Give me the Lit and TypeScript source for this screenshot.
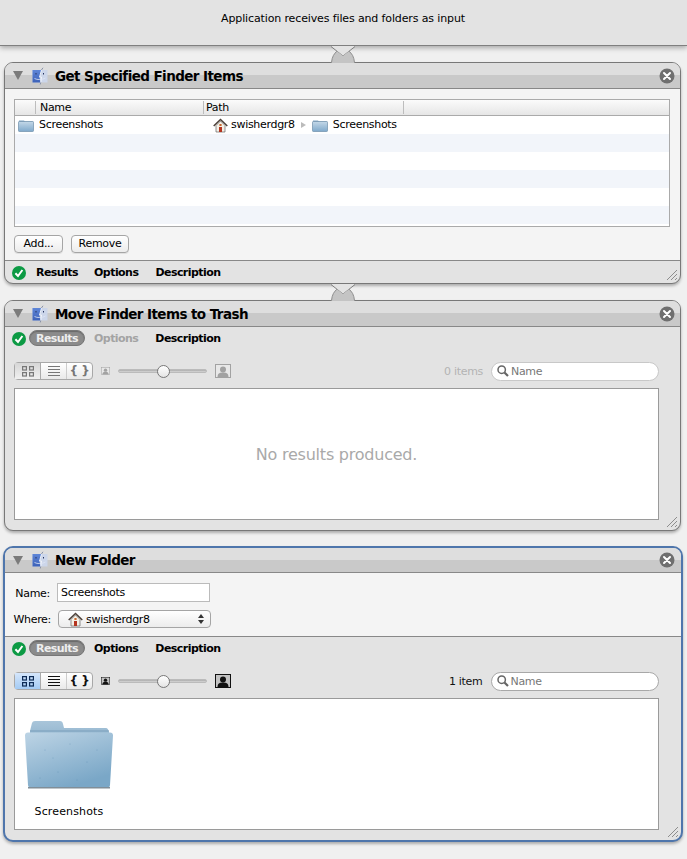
import { LitElement, html, css, svg } from "lit";
import { customElement } from "lit/decorators.js";

const finder = () => svg`<svg class="finder" width="18" height="18" viewBox="0 0 18 18">
  <defs><linearGradient id="fb" x1="0" y1="0" x2="0" y2="1"><stop offset="0" stop-color="#5f86d8"/><stop offset="1" stop-color="#3d62b8"/></linearGradient></defs>
  <rect x="1.500" y="3" width="15" height="12.500" fill="#ccd6ea"/>
  <path d="M1.500 3H10.500L8.500 10 9.500 15.500H1.500Z" fill="url(#fb)"/>
  <path d="M10.500 3 8.500 10h2L9.800 15.500" fill="none" stroke="#f4f6fb" stroke-width=".9"/>
  <path d="M5 6v1.500M12.500 6v1.500" stroke="#26345e" stroke-width="1"/>
  <path d="M3.500 11.500c2.500 1.500 8 1.500 11-.5" fill="none" stroke="#dfe6f5" stroke-width=".8"/>
  <path d="M12 .8 10.400 3M9.800 15.500l-.6 2" stroke="#8a93a8" stroke-width="1"/>
</svg>`;

const closeBtn = () => svg`<svg class="close" width="16" height="16" viewBox="0 0 16 16">
  <circle cx="8" cy="8" r="7.500" fill="#6f6f6f"/><path d="M5 5l6 6M11 5l-6 6" stroke="#fff" stroke-width="2" stroke-linecap="round"/>
</svg>`;

const check = () => svg`<svg class="check" width="14" height="14" viewBox="0 0 14 14">
  <circle cx="7" cy="7" r="7" fill="#0c9a44"/><path d="M3.400 7.200l2.600 2.800 4.400-6" fill="none" stroke="#fff" stroke-width="2"/>
</svg>`;

const folder = () => svg`<svg class="sfolder" width="16" height="14" viewBox="0 0 16 14">
  <defs><linearGradient id="sf" x1="0" y1="0" x2="0" y2="1"><stop offset="0" stop-color="#c4d8e8"/><stop offset="1" stop-color="#7fa9cb"/></linearGradient></defs>
  <path d="M1 2.500h5l1 1h8V13H1Z" fill="#86a9c6"/><rect x=".5" y="3.500" width="15" height="10" rx=".8" fill="url(#sf)" stroke="#6f8fab" stroke-width=".7"/>
</svg>`;

const house = () => svg`<svg class="house" width="15" height="15" viewBox="0 0 15 15">
  <path d="M3 7.500V14h9V7.500L7.500 3Z" fill="#f4f0e6" stroke="#666" stroke-width=".7"/>
  <path d="M.7 8 7.500 1.500 14.300 8" fill="none" stroke="#4c4038" stroke-width="1.500"/>
  <rect x="6" y="9" width="3" height="5" fill="#b5341f"/><rect x="6.400" y="6" width="2.200" height="2" fill="#c86a30"/>
</svg>`;

const notch = () => svg`<svg class="notch" width="27" height="17" viewBox="0 0 27 17">
  <path d="M1 0 13 10 25 0Z" fill="#e3e3e3"/>
  <path d="M1 .5 13 10 25 .5" fill="none" stroke="#808080"/>
  <path d="M1.500 17C2 11 4 7.500 7 5.200L13 10 19 5.200C22 7.500 24 11 24.500 17Z" fill="#c4c4c4"/>
  <path d="M1.500 16.500C2 11 4 7.500 7 5.200M24.500 16.500C24 11 22 7.500 19 5.200" fill="none" stroke="#8e8e8e"/>
</svg>`;

const grip = () => svg`<svg class="grip" width="12" height="12" viewBox="0 0 12 12">
  <path d="M1 11 11 1M5 11l6-6M9 11l2-2" stroke="#777" stroke-width=".8"/>
</svg>`;

const icoGrid = () => svg`<svg width="12" height="11" viewBox="0 0 12 11" fill="none" stroke="currentColor" stroke-width="1.200"><rect x=".6" y=".6" width="3.800" height="3.400"/><rect x="7.600" y=".6" width="3.800" height="3.400"/><rect x=".6" y="6.600" width="3.800" height="3.400"/><rect x="7.600" y="6.600" width="3.800" height="3.400"/></svg>`;
const icoList = () => svg`<svg width="12" height="11" viewBox="0 0 12 11" stroke="currentColor"><path d="M0 .5h12M0 3.500h12M0 6.500h12M0 9.500h12"/></svg>`;
const person = (w: number, h: number) => svg`<svg width="${w}" height="${h}" viewBox="0 0 16 14"><rect x=".5" y=".5" width="15" height="13" fill="#fff" stroke="currentColor"/><rect x="1" y="1" width="14" height="12" fill="currentColor" opacity=".25"/><circle cx="8" cy="5.500" r="3" fill="currentColor"/><path d="M2.500 13c0-4 3-4.500 5.500-4.500s5.500.5 5.500 4.500Z" fill="currentColor"/></svg>`;
const mag = () => svg`<svg class="mag" width="12" height="12" viewBox="0 0 12 12" fill="none" stroke="#666"><circle cx="4.700" cy="4.700" r="3.700" stroke-width="1.500"/><path d="M7.500 7.500l3.500 3.500" stroke-width="2.200"/></svg>`;
const bigFolder = () => svg`<svg width="88" height="70" viewBox="0 0 88 70">
  <defs>
    <linearGradient id="bf" x1="0" y1="0" x2=".5" y2="1"><stop offset="0" stop-color="#bdd4e5"/><stop offset="1" stop-color="#7aa7c7"/></linearGradient>
    <linearGradient id="bs" x1="0" y1="0" x2="0" y2="1"><stop offset="0" stop-color="#a9c5da"/><stop offset="1" stop-color="#8fb3cd"/></linearGradient>
  </defs>
  <path d="M5 11 7 3Q7.500 1 10 1H35Q37.500 1 38 4L39 8H81Q83 8 84 12V20H5Z" fill="url(#bs)"/>
  <path d="M5 11H84" stroke="#7a9fbb" stroke-width="1"/>
  <path d="M3 12.500H85Q88 12.500 88 15.500L85 65Q85 67.500 82 67.500H6Q3 67.500 3 65L0 15.500Q0 12.500 3 12.500Z" fill="url(#bf)"/>
  <rect x="3" y="67" width="82" height="1.500" fill="#808e98"/>
  <g fill="#5d8fb4" opacity=".6"><circle cx="20" cy="30" r=".5"/><circle cx="45" cy="24" r=".5"/><circle cx="62" cy="42" r=".6"/><circle cx="33" cy="52" r=".6"/><circle cx="72" cy="30" r=".5"/><circle cx="15" cy="58" r=".5"/><circle cx="52" cy="60" r=".6"/><circle cx="28" cy="38" r=".5"/></g>
</svg>`;

@customElement("app-root")
class AppRoot extends LitElement {
  static styles = css`
    :host { display: block; width: 687px; height: 859px; overflow: hidden; background: #f0f0f0; font-family: "DejaVu Sans", sans-serif; font-size: 11px; letter-spacing: -0.3px; color: #000; }
    svg { display: block; flex: none; }
    .head { height: 46px; box-sizing: border-box; background: #e3e3e3; border-bottom: 1px solid #7f7f7f; box-shadow: 0 2px 5px rgba(0,0,0,.3); text-align: center; padding-top: 12px; line-height: 13px; padding-right: 1px; letter-spacing: -0.13px; position: relative; }
    .cards { display: flex; flex-direction: column; padding: 16px 6px 0 4px; gap: 16px; }
    .card { position: relative; border: 1px solid #787878; border-radius: 9px; box-shadow: 0 2px 3px rgba(0,0,0,.28); background: #e3e3e3; }
    .card.sel { border: 2.5px solid #4f76ac; margin: -1px -1.5px 0 -1px; border-radius: 10px; }
    .title { height: 25px; border-bottom: 1px solid #888; border-radius: 8px 8px 0 0; background: linear-gradient(#dedede 0 12px, #c9c9c9 12px); display: flex; align-items: center; padding: 0 5px 0 8px; }
    .sel .title { height: 24px; padding-right: 6px; }
    .tri { width: 0; height: 0; border-left: 5px solid transparent; border-right: 5px solid transparent; border-top: 9px solid #7b7b7b; margin-right: 8px; }
    .finder { margin-right: 6px; }
    .title h2 { margin: 0; flex: 1; font-size: 13.5px; font-weight: 700; letter-spacing: -0.58px; }
    .sel .title h2 { margin-bottom: 1px; }
    .notch { position: absolute; left: 325px; top: -17px; z-index: 2; }
    .grip { position: absolute; right: 2px; bottom: 2px; }

    .body { background: #f4f4f4; padding: 10px 10px 8px 9px; height: 172px; box-sizing: border-box; border-bottom: 1px solid #888; }
    .table { height: 128px; box-sizing: border-box; border: 1px solid #aaa; background: #fff; overflow: hidden; }
    .thead { height: 16px; box-sizing: border-box; border-bottom: 1px solid #aaa; background: linear-gradient(#fbfbfb, #e6e6e6); display: grid; grid-template-columns: 21px 168px 200px 1fr; line-height: 15px; }
    .thead span { border-right: 1px solid #bdbdbd; padding-left: 4px; margin: 1px 0; line-height: 13px; }
    .thead span:nth-child(3) { padding-left: 2px; }
    .thead span:last-child { border: none; }
    .rows { display: flex; flex-direction: column; }
    .row { height: 18px; display: flex; align-items: center; }
    .row:nth-child(even) { background: #f2f5fa; }
    .row .n { display: flex; align-items: center; gap: 5px; width: 198px; padding-left: 3px; box-sizing: border-box; }
    .row .p { display: flex; align-items: center; }
    .row span { margin-bottom: 2px; }
    .arrow { width: 0; height: 0; border-left: 5px solid #bbb; border-top: 3px solid transparent; border-bottom: 3px solid transparent; margin: 0 6px 0 6px; }
    .house { margin-right: 3px; }
    .lead { margin-left: 5px; }
    .btns { display: flex; gap: 8px; margin-top: 8px; }
    .btn { height: 18px; box-sizing: border-box; border: 1px solid #a5a5a5; border-radius: 4px; background: linear-gradient(#fff, #ececec); text-align: center; line-height: 16px; box-shadow: 0 1px 0 rgba(0,0,0,.08); }
    .add { width: 49px; } .rem { width: 58px; }

    .tabs { height: 23px; display: flex; align-items: center; padding-left: 7px; font-weight: 700; }
    .tabs.foot { height: 21px; padding-top: 1px; }
    .tabs .check { margin-right: 3px; }
    .tab { height: 16px; line-height: 15px; box-sizing: border-box; padding: 0 7px; margin-right: 3px; border-radius: 8px; letter-spacing: -0.55px; }
    .tab.on { width: 56px; padding: 0; margin: 0 2px 1px 0; text-align: center; background: #8b8b8b; color: #eee; border: 1px solid #777; box-shadow: inset 0 1px 1px rgba(0,0,0,.25); }
    .tab.off { color: #a3a3a3; }
    .foot .tab:nth-of-type(1) { margin-right: 2px; }
    .rpanel { padding: 11px 21px 10px 9px; }
    .sel .rpanel { padding-right: 22px; }
    .tools { height: 20px; display: flex; align-items: center; margin-bottom: 7px; }
    .seg { display: flex; width: 79px; height: 18px; box-sizing: border-box; border: 1px solid #a8a8a8; border-radius: 4px; background: linear-gradient(#fff, #e9e9e9); color: #777; }
    .seg > div { display: flex; align-items: center; justify-content: center; border-right: 1px solid #ccc; }
    .seg > div:nth-child(1) { width: 25px; border-right-color: #aaa; background: linear-gradient(#d6d6d6, #f0f0f0); }
    .seg > div:nth-child(2) { width: 25px; }
    .seg > div:nth-child(3) { flex: 1; border: none; font-weight: 700; font-size: 12px; line-height: 14px; letter-spacing: -0.5px; }
    .sel .seg { color: #111; }
    .sel .seg > div:nth-child(1) { background: linear-gradient(#d5e6fb, #a4cbf4); color: #0c2a55; }
    .tiny { margin-left: 8px; color: #a2a2a2; }
    .sel .tiny, .sel .big { color: #111; }
    .slider { position: relative; width: 89px; height: 4px; margin: 0 8px 0 8px; border-radius: 2px; background: linear-gradient(#aaa, #d8d8d8); border: 1px solid #bbb; box-sizing: border-box; }
    .thumb { position: absolute; left: 38px; top: -5px; width: 13px; height: 13px; box-sizing: border-box; border-radius: 50%; border: 1px solid #777; background: linear-gradient(#fff, #e4e4e4); }
    .big { color: #a2a2a2; }
    .count { margin-left: auto; margin-right: 8px; color: #b3b3b3; }
    .sel .count { color: #111; }
    .search { width: 168px; height: 19px; box-sizing: border-box; border: 1px solid #c8c8c8; border-radius: 10px; background: #fff; display: flex; align-items: center; padding-left: 5px; gap: 2px; color: #777; }
    .sel .search { border-color: #a8a8a8; }
    .box { height: 132px; box-sizing: border-box; border: 1px solid #9a9a9a; background: #fff; }
    .empty { display: flex; align-items: center; justify-content: center; font-size: 16px; color: #a9a9a9; letter-spacing: -0.23px; }
    .icon { width: 88px; margin: 21px 0 0 10px; display: flex; flex-direction: column; align-items: center; gap: 15px; }
    .icon span { line-height: 13px; letter-spacing: 0.15px; }

    .form { background: #f4f4f4; height: 64px; box-sizing: border-box; border-bottom: 1px solid #888; padding: 10px 0 0 6px; display: grid; grid-template-columns: 46px 153px; grid-auto-rows: 19px; row-gap: 8px; align-items: center; justify-content: start; }
    .form label { text-align: right; padding-right: 7px; margin-top: 1px; }
    .form label.w { padding-right: 6px; margin-top: 0; }
    .input { height: 19px; box-sizing: border-box; border: 1px solid #bbb; background: #fff; padding-left: 3px; line-height: 18px; }
    .popup { height: 18px; margin: 0 -1px 0 1px; align-self: start; box-sizing: border-box; border: 1px solid #a5a5a5; border-radius: 4px; background: linear-gradient(#fff, #ececec); display: flex; align-items: center; padding-left: 9px; }
    .updown { margin-left: auto; margin-right: 6px; }
  `;

  private results(on: boolean, count: string, body: unknown, empty = false) {
    return html`
      <div class="tabs">${check()}<div class="tab on">Results</div><div class="tab ${on ? "" : "off"}">Options</div><div class="tab">Description</div></div>
      <div class="rpanel">
        <div class="tools">
          <div class="seg"><div>${icoGrid()}</div><div>${icoList()}</div><div>{ }</div></div>
          <div class="tiny">${person(9, 8)}</div>
          <div class="slider"><div class="thumb"></div></div>
          <div class="big">${person(16, 14)}</div>
          <div class="count">${count}</div>
          <div class="search">${mag()}<span>Name</span></div>
        </div>
        <div class="box ${empty ? "empty" : ""}">${body}</div>
      </div>`;
  }

  render() {
    return html`
      <div class="head">Application receives files and folders as input</div>
      <div class="cards">
        <section class="card">
          ${notch()}
          <div class="title"><div class="tri"></div>${finder()}<h2>Get Specified Finder Items</h2>${closeBtn()}</div>
          <div class="body">
            <div class="table">
              <div class="thead"><span></span><span>Name</span><span>Path</span><span></span></div>
              <div class="rows">
                <div class="row"><div class="n">${folder()}<span>Screenshots</span></div><div class="p">${house()}<span>swisherdgr8</span><i class="arrow"></i>${folder()}<span class="lead">Screenshots</span></div></div>
                <div class="row"></div><div class="row"></div><div class="row"></div><div class="row"></div><div class="row"></div>
              </div>
            </div>
            <div class="btns"><div class="btn add">Add...</div><div class="btn rem">Remove</div></div>
          </div>
          <div class="tabs foot">${check()}<div class="tab">Results</div><div class="tab">Options</div><div class="tab">Description</div></div>
          ${grip()}
        </section>
        <section class="card">
          ${notch()}
          <div class="title"><div class="tri"></div>${finder()}<h2>Move Finder Items to Trash</h2>${closeBtn()}</div>
          ${this.results(false, "0 items", "No results produced.", true)}
          ${grip()}
        </section>
        <section class="card sel">
          <div class="title"><div class="tri"></div>${finder()}<h2>New Folder</h2>${closeBtn()}</div>
          <div class="form">
            <label>Name:</label><div class="input">Screenshots</div>
            <label class="w">Where:</label>
            <div class="popup">${house()}<span>swisherdgr8</span>
              <svg class="updown" width="6" height="10" viewBox="0 0 6 10" fill="#333"><path d="M3 0l3 4H0ZM3 10l3-4H0Z"/></svg>
            </div>
          </div>
          ${this.results(true, "1 item", html`<div class="icon">${bigFolder()}<span>Screenshots</span></div>`)}
          ${grip()}
        </section>
      </div>`;
  }
}
